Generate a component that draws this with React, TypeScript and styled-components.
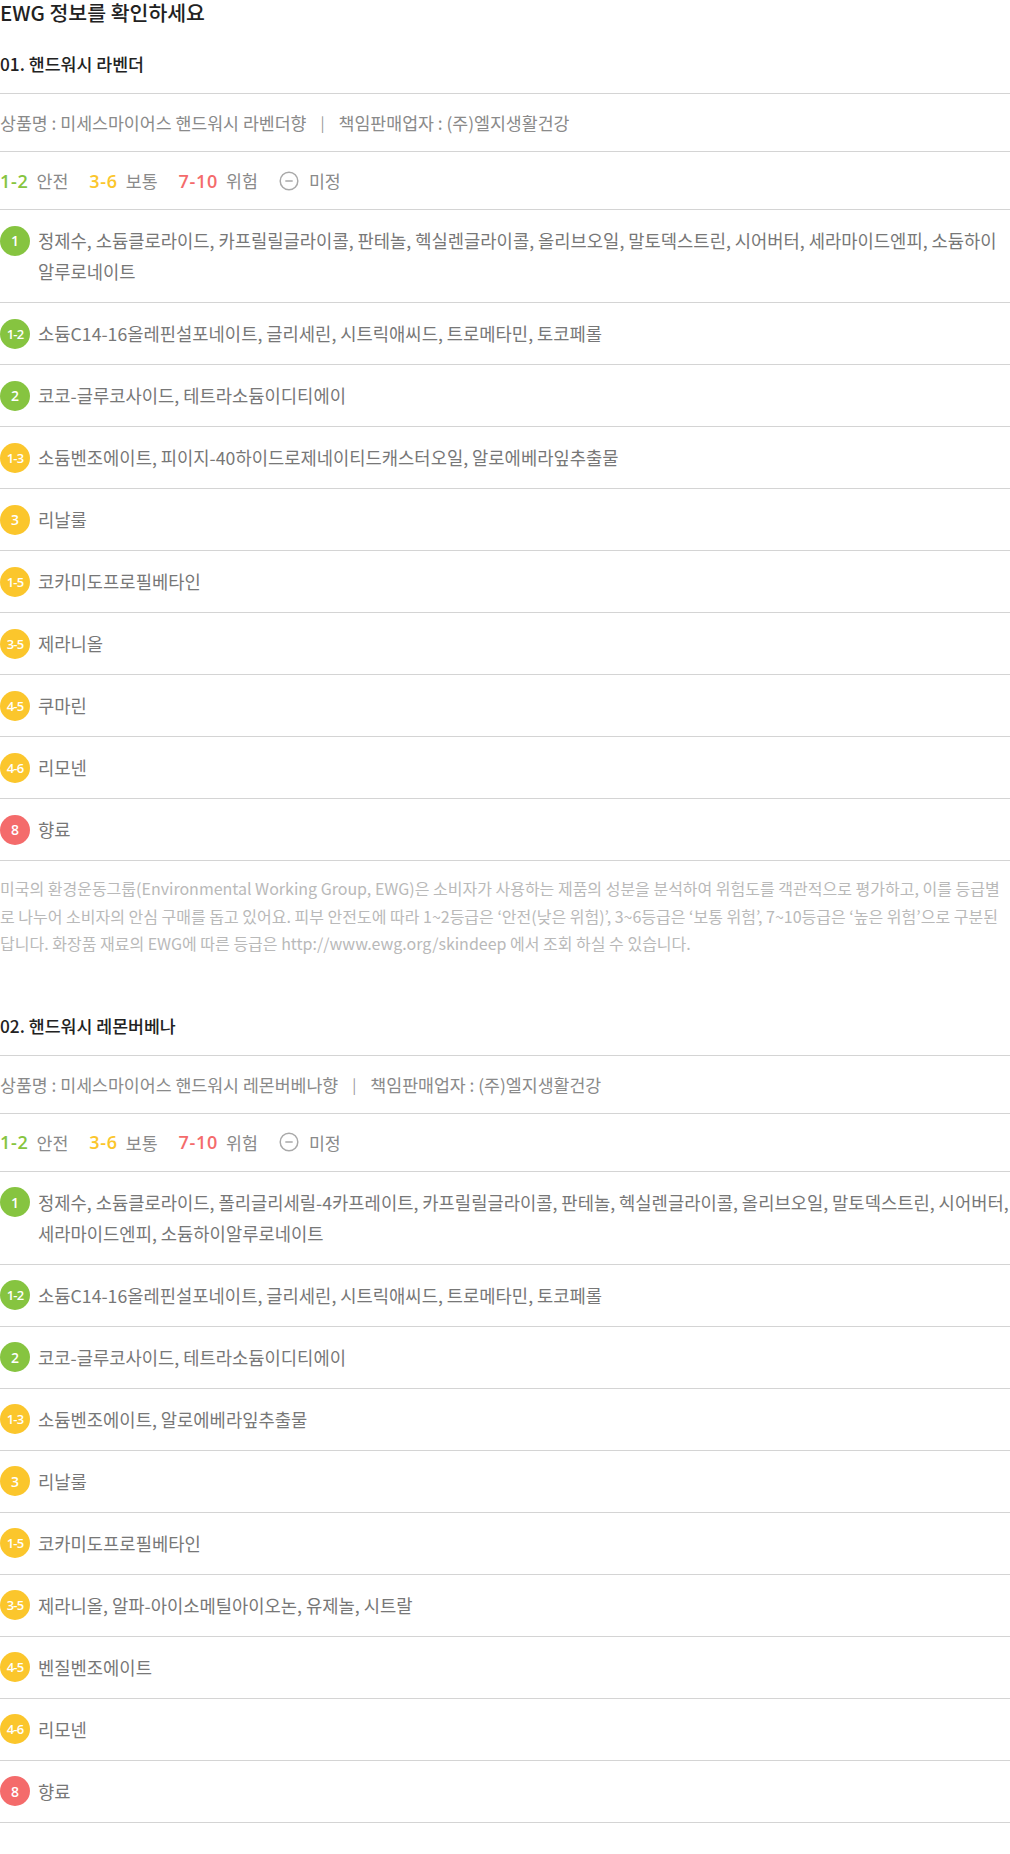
import React from "react";
import styled, { createGlobalStyle } from "styled-components";

type Item = { grade: string; text: string };
type Product = { no: string; name: string; fullName: string; items: Item[] };

const products: Product[] = [
  {
    no: "01",
    name: "핸드워시 라벤더",
    fullName: "미세스마이어스 핸드워시 라벤더향",
    items: [
      {
        grade: "1",
        text: "정제수, 소듐클로라이드, 카프릴릴글라이콜, 판테놀, 헥실렌글라이콜, 올리브오일, 말토덱스트린, 시어버터, 세라마이드엔피, 소듐하이알루로네이트",
      },
      { grade: "1-2", text: "소듐C14-16올레핀설포네이트, 글리세린, 시트릭애씨드, 트로메타민, 토코페롤" },
      { grade: "2", text: "코코-글루코사이드, 테트라소듐이디티에이" },
      { grade: "1-3", text: "소듐벤조에이트, 피이지-40하이드로제네이티드캐스터오일, 알로에베라잎추출물" },
      { grade: "3", text: "리날룰" },
      { grade: "1-5", text: "코카미도프로필베타인" },
      { grade: "3-5", text: "제라니올" },
      { grade: "4-5", text: "쿠마린" },
      { grade: "4-6", text: "리모넨" },
      { grade: "8", text: "향료" },
    ],
  },
  {
    no: "02",
    name: "핸드워시 레몬버베나",
    fullName: "미세스마이어스 핸드워시 레몬버베나향",
    items: [
      {
        grade: "1",
        text: "정제수, 소듐클로라이드, 폴리글리세릴-4카프레이트, 카프릴릴글라이콜, 판테놀, 헥실렌글라이콜, 올리브오일, 말토덱스트린, 시어버터, 세라마이드엔피, 소듐하이알루로네이트",
      },
      { grade: "1-2", text: "소듐C14-16올레핀설포네이트, 글리세린, 시트릭애씨드, 트로메타민, 토코페롤" },
      { grade: "2", text: "코코-글루코사이드, 테트라소듐이디티에이" },
      { grade: "1-3", text: "소듐벤조에이트, 알로에베라잎추출물" },
      { grade: "3", text: "리날룰" },
      { grade: "1-5", text: "코카미도프로필베타인" },
      { grade: "3-5", text: "제라니올, 알파-아이소메틸아이오논, 유제놀, 시트랄" },
      { grade: "4-5", text: "벤질벤조에이트" },
      { grade: "4-6", text: "리모넨" },
      { grade: "8", text: "향료" },
    ],
  },
];

const colors = {
  safe: "#86c440",
  normal: "#fbc62c",
  danger: "#f46b6b",
};

function levelOf(grade: string): keyof typeof colors {
  const max = Math.max(...grade.split("-").map(Number));
  if (max <= 2) return "safe";
  if (max <= 6) return "normal";
  return "danger";
}

function App() {
  return (
    <>
      <GlobalStyle />
      <Page>
        <PageTitle>EWG 정보를 확인하세요</PageTitle>
        {products.map((p, idx) => (
          <Section key={p.no} first={idx === 0}>
            <ProductTitle>
              {p.no}. {p.name}
            </ProductTitle>
            <InfoRow>
              상품명 : {p.fullName}
              <Divider>|</Divider>
              책임판매업자 : (주)엘지생활건강
            </InfoRow>
            <LegendRow>
              <LegendItem>
                <LegendNum level="safe">1-2</LegendNum>안전
              </LegendItem>
              <LegendItem>
                <LegendNum level="normal">3-6</LegendNum>보통
              </LegendItem>
              <LegendItem>
                <LegendNum level="danger">7-10</LegendNum>위험
              </LegendItem>
              <LegendItem>
                <svg width="20" height="20" viewBox="0 0 20 20">
                  <circle cx="10" cy="10" r="8.8" fill="none" stroke="#a9a9a9" strokeWidth="1.5" />
                  <line x1="6.3" y1="10" x2="13.7" y2="10" stroke="#a9a9a9" strokeWidth="1.5" />
                </svg>
                <LegendGap />
                미정
              </LegendItem>
            </LegendRow>
            <List>
              {p.items.map((it) => (
                <IngredientRow key={it.grade}>
                  <Badge level={levelOf(it.grade)} small={it.grade.length > 1}>
                    {it.grade}
                  </Badge>
                  <IngredientText>{it.text}</IngredientText>
                </IngredientRow>
              ))}
            </List>
            {idx === 0 && (
              <Note>
                미국의 환경운동그룹(Environmental Working Group, EWG)은 소비자가 사용하는 제품의 성분을 분석하여
                위험도를 객관적으로 평가하고, 이를 등급별로 나누어 소비자의 안심 구매를 돕고 있어요. 피부 안전도에
                따라 1~2등급은 ‘안전(낮은 위험)’, 3~6등급은 ‘보통 위험’, 7~10등급은 ‘높은 위험’으로 구분된답니다.
                화장품 재료의 EWG에 따른 등급은 http://www.ewg.org/skindeep 에서 조회 하실 수 있습니다.
              </Note>
            )}
          </Section>
        ))}
      </Page>
    </>
  );
}

export default App;

const GlobalStyle = createGlobalStyle`
  body {
    margin: 0;
    background: #fff;
    font-family: "Noto Sans CJK KR", "Noto Sans", sans-serif;
  }
`;

const Page = styled.div`
  width: 1010px;
  padding-bottom: 33px;
`;

const PageTitle = styled.h1`
  margin: 0;
  font-size: 20.5px;
  line-height: 24px;
  font-weight: 500;
  color: #222;
`;

const Section = styled.section<{ first?: boolean }>`
  margin-top: ${({ first }) => (first ? "29px" : "57px")};
`;

const ProductTitle = styled.h2`
  margin: 0;
  padding-bottom: 18px;
  font-size: 17.3px;
  line-height: 22px;
  font-weight: 500;
  color: #222;
  border-bottom: 1px solid #d4d4d4;
`;

const InfoRow = styled.div`
  display: flex;
  align-items: center;
  height: 57px;
  font-size: 17.3px;
  color: #8a8a8a;
  border-bottom: 1px solid #d4d4d4;
`;

const Divider = styled.span`
  margin: 0 14px;
  font-size: 15px;
  color: #999;
`;

const LegendRow = styled.div`
  display: flex;
  align-items: center;
  gap: 21px;
  height: 57px;
  border-bottom: 1px solid #d4d4d4;
`;

const LegendItem = styled.div`
  display: flex;
  align-items: center;
  font-size: 17.3px;
  color: #8a8a8a;
`;

const LegendGap = styled.span`
  width: 10px;
`;

const LegendNum = styled.span<{ level: keyof typeof colors }>`
  margin-right: 8px;
  font-family: "Open Sans", "Noto Sans", sans-serif;
  font-weight: 600;
  font-size: 18px;
  letter-spacing: 0.7px;
  color: ${({ level }) => colors[level]};
`;

const List = styled.div`
  display: flex;
  flex-direction: column;
`;

const IngredientRow = styled.div`
  display: flex;
  align-items: flex-start;
  gap: 8px;
  padding: 15px 0;
  border-bottom: 1px solid #d4d4d4;
`;

const Badge = styled.span<{ level: keyof typeof colors; small?: boolean }>`
  flex: none;
  display: flex;
  align-items: center;
  justify-content: center;
  width: 30px;
  height: 30px;
  margin-top: 0.5px;
  border-radius: 50%;
  background: ${({ level }) => colors[level]};
  color: #fff;
  font-family: "Open Sans", "Noto Sans", sans-serif;
  font-weight: 600;
  font-size: ${({ small }) => (small ? "13px" : "14px")};
  letter-spacing: ${({ small }) => (small ? "-0.8px" : "0")};
`;

const IngredientText = styled.span`
  font-size: 17.7px;
  line-height: 31px;
  color: #777;
`;

const Note = styled.p`
  margin: 0;
  padding-top: 14px;
  font-size: 16px;
  line-height: 27.5px;
  color: #b9b9b9;
`;
